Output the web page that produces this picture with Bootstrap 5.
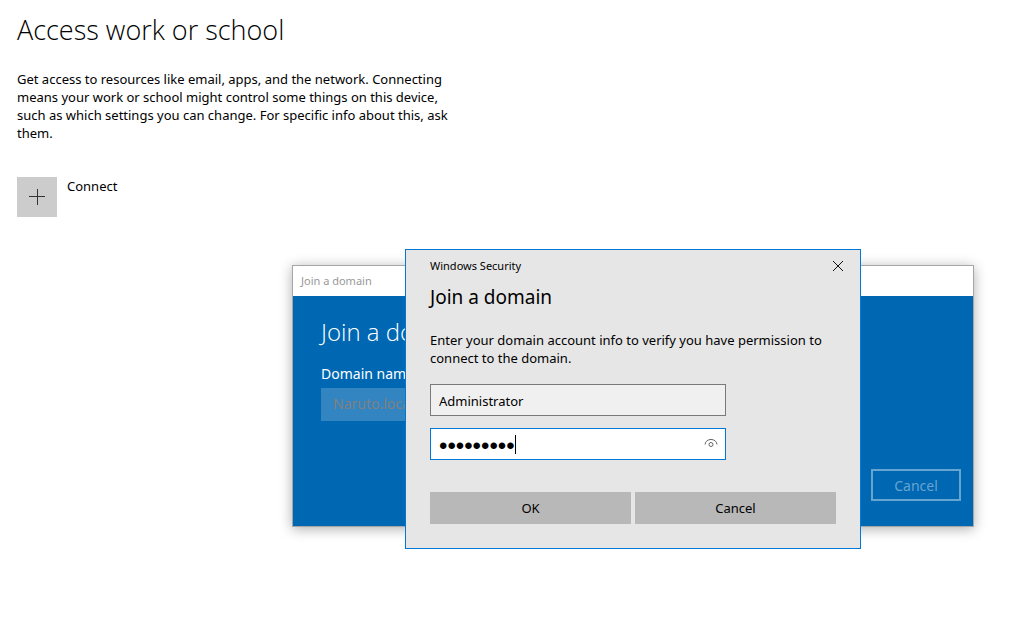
<!DOCTYPE html>
<html lang="en">
<head>
<meta charset="utf-8">
<meta name="viewport" content="width=device-width, initial-scale=1">
<title>Access work or school</title>
<link href="https://cdn.jsdelivr.net/npm/bootstrap@5.3.0/dist/css/bootstrap.min.css" rel="stylesheet">
<style>
  body { font-family: "Noto Sans", "Open Sans", sans-serif; font-size: 13px; line-height: 18px; color: #000; background: #fff; }
  .desktop { min-height: 100vh; padding: 12px 17px; }
  .page-title { font-family: "Open Sans", sans-serif; font-size: 27px; line-height: 36px; font-weight: 300; margin-bottom: 22px; }
  .intro { max-width: 450px; margin-bottom: 35px; }
  .connect { color: #000; gap: 10px; }
  .plus-tile { width: 40px; height: 40px; background: #ccc; }

  .join-window { left: 292px; top: 265px; width: 682px; height: 262px; border: 1px solid #a6a6a6; box-shadow: 0 2px 12px rgba(0,0,0,.32); background: #0067b3; }
  .join-titlebar { height: 30px; padding: 6px 8px; background: #fff; color: #999; font-size: 11px; }
  .join-body { padding: 20px 12px 25px 28px; color: #fff; }
  .join-title { font-family: "Open Sans", sans-serif; font-size: 24px; line-height: 32px; font-weight: 300; margin-bottom: 16px; }
  .join-label { font-size: 14px; line-height: 20px; margin-bottom: 4px; }
  .join-field { width: 300px; height: 33px; padding: 0 12px 2px; background: #3385c2; color: #808080; font-size: 14px; }
  .join-cancel { width: 90px; height: 32px; border: 2px solid #66a4d1; color: #66a4d1; font-size: 14px; line-height: 20px; padding: 1px 0 0; }

  .security { left: 405px; top: 249px; width: 456px; height: 300px; border: 1px solid #0078d7; background: #e6e6e6; padding: 7px 24px 24px; }
  .security-caption { font-size: 11px; }
  .security-title { font-size: 19px; line-height: 26px; font-weight: 400; margin: 9px 0 21px; }
  .close-btn { width: 12px; height: 18px; margin-right: -8px; }
  .security-text { margin-bottom: 17px; }
  .field { width: 296px; height: 32px; margin-bottom: 12px; padding: 1px 8px 0; font-size: 13px; color: #000; background: #f0f0f0; border: 1px solid #7a7a7a; }
  .field.secret { background: #fff; border-color: #0078d7; font-family: "Liberation Sans", sans-serif; font-size: 24px; margin: 0; outline: 0; padding: 3px 32px 0 8px; }
  .secret-row { width: 296px; margin-bottom: 32px; }
  .caret { left: 85px; top: 7px; width: 1px; height: 19px; background: #000; }
  .reveal { right: 8px; top: 8px; }
  .flat-btn { height: 32px; background: #b8b8b8; color: #000; font-size: 13px; line-height: 18px; padding: 0; }
  .plain { border: 0; background: none; padding: 0; }
</style>
</head>
<body>
<div class="desktop position-relative overflow-hidden">
  <main>
    <h1 class="page-title">Access work or school</h1>
    <p class="intro">Get access to resources like email, apps, and the network. Connecting<br>means your work or school might control some things on this device,<br>such as which settings you can change. For specific info about this, ask<br>them.</p>
    <button type="button" class="plain connect d-flex align-items-start">
      <span class="plus-tile d-flex align-items-center justify-content-center">
        <svg width="16" height="16" viewBox="0 0 16 16" stroke="#333" stroke-width="1" aria-hidden="true"><path d="M0 7.5H16M8.5 0V16"/></svg>
      </span>
      <span>Connect</span>
    </button>
  </main>

  <section class="join-window position-absolute d-flex flex-column" aria-label="Join a domain">
    <div class="join-titlebar">Join a domain</div>
    <div class="join-body d-flex flex-column flex-grow-1">
      <h2 class="join-title">Join a domain</h2>
      <label class="join-label" for="domain">Domain name</label>
      <input id="domain" class="join-field border-0 rounded-0" type="text" value="Naruto.local" readonly>
      <button type="button" class="btn join-cancel rounded-0 align-self-end mt-auto">Cancel</button>
    </div>
  </section>

  <section class="security position-absolute" role="dialog" aria-labelledby="sec-title">
    <div class="d-flex justify-content-between">
      <span class="security-caption">Windows Security</span>
      <button type="button" class="plain close-btn d-flex align-items-center" aria-label="Close">
        <svg width="12" height="12" viewBox="0 0 12 12" stroke="#111" stroke-width="1" aria-hidden="true"><path d="M1 1L11 11M11 1L1 11"/></svg>
      </button>
    </div>
    <h2 class="security-title" id="sec-title">Join a domain</h2>
    <p class="security-text">Enter your domain account info to verify you have permission to<br>connect to the domain.</p>
    <input class="field d-block rounded-0" type="text" value="Administrator" aria-label="User name">
    <div class="secret-row position-relative">
      <input class="field secret d-block rounded-0" type="password" value="Password1" aria-label="Password">
      <span class="caret position-absolute"></span>
      <button type="button" class="plain reveal position-absolute d-flex" aria-label="Show password">
        <svg width="14" height="14" viewBox="0 0 14 14" fill="none" stroke="#666" aria-hidden="true"><path d="M1 8.5C1.500 1.800 12.500 1.800 13 8.500"/><circle cx="7" cy="8.500" r="2"/></svg>
      </button>
    </div>
    <div class="d-flex gap-1">
      <button type="button" class="btn flat-btn rounded-0 border-0 flex-fill w-50">OK</button>
      <button type="button" class="btn flat-btn rounded-0 border-0 flex-fill w-50">Cancel</button>
    </div>
  </section>
</div>
<script src="https://cdn.jsdelivr.net/npm/bootstrap@5.3.0/dist/js/bootstrap.bundle.min.js"></script>
</body>
</html>
